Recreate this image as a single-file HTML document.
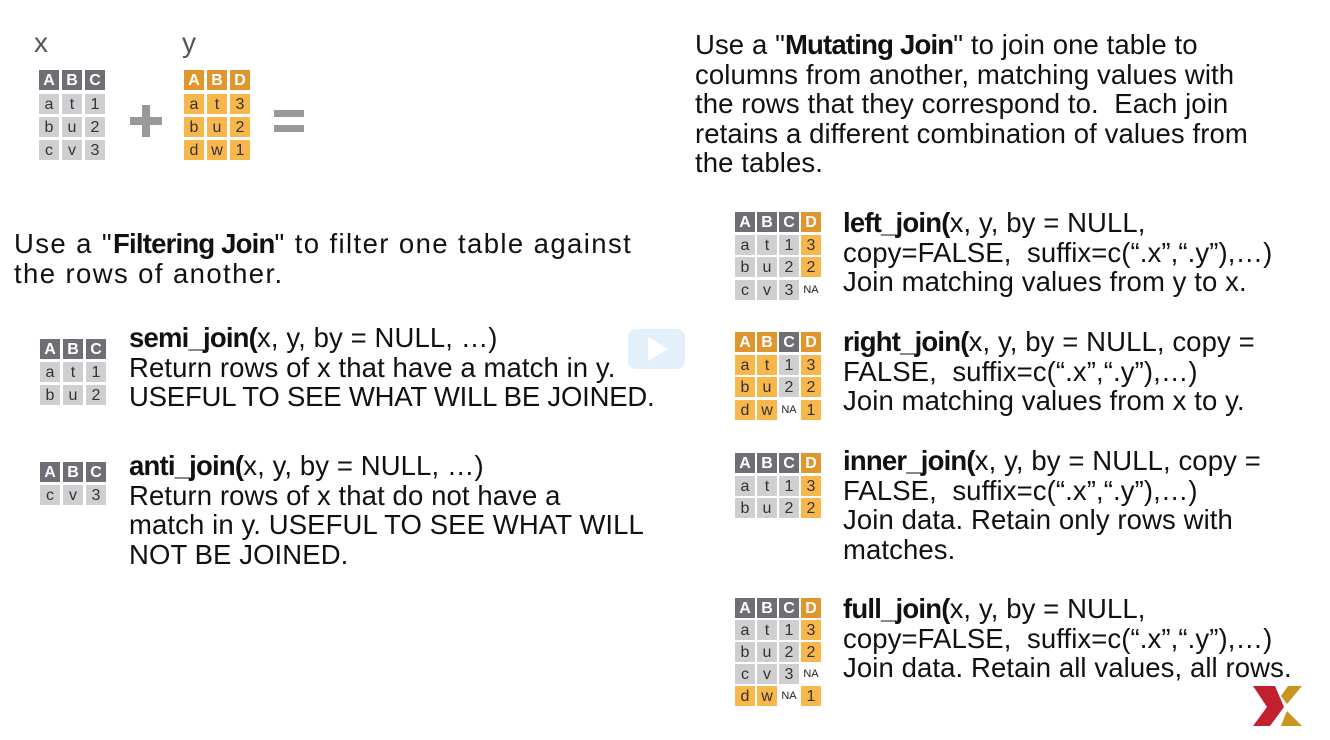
<!DOCTYPE html>
<html><head><meta charset="utf-8"><style>
body{margin:0;width:1330px;height:740px;background:#fff;position:relative;overflow:hidden;font-family:"Liberation Sans",sans-serif;color:#111}
.t{position:absolute;font-size:27.5px;line-height:29.5px;white-space:nowrap;letter-spacing:0.1px}
.tb{position:absolute}
.c{position:absolute;width:20px;height:20px;font-size:16px;line-height:21px;text-align:center;color:#333}
.h{color:#fff;font-weight:bold;font-size:16px}
.g{background:#cfcfd1}.G{background:#6e6f74}.o{background:#f8b74a}.O{background:#df962c}
.na{font-size:11px;color:#222}
b{font-weight:bold;letter-spacing:-0.8px}
</style></head><body>
<div class="t" style="left:34px;top:28px;font-size:28px;color:#555">x</div>
<div class="t" style="left:182px;top:28px;font-size:28px;color:#555">y</div>
<div class="tb" style="left:39px;top:70px">
<div class="c G h" style="left:0;top:0">A</div><div class="c G h" style="left:23px;top:0">B</div><div class="c G h" style="left:46px;top:0">C</div>
<div class="c g" style="left:0;top:24px">a</div><div class="c g" style="left:23px;top:24px">t</div><div class="c g" style="left:46px;top:24px">1</div>
<div class="c g" style="left:0;top:47px">b</div><div class="c g" style="left:23px;top:47px">u</div><div class="c g" style="left:46px;top:47px">2</div>
<div class="c g" style="left:0;top:70px">c</div><div class="c g" style="left:23px;top:70px">v</div><div class="c g" style="left:46px;top:70px">3</div>
</div>
<div style="position:absolute;left:130px;top:117px;width:32px;height:8px;background:#999"></div>
<div style="position:absolute;left:142px;top:105px;width:8px;height:32px;background:#999"></div>
<div class="tb" style="left:184px;top:70px">
<div class="c O h" style="left:0;top:0">A</div><div class="c O h" style="left:23px;top:0">B</div><div class="c O h" style="left:46px;top:0">D</div>
<div class="c o" style="left:0;top:24px">a</div><div class="c o" style="left:23px;top:24px">t</div><div class="c o" style="left:46px;top:24px">3</div>
<div class="c o" style="left:0;top:47px">b</div><div class="c o" style="left:23px;top:47px">u</div><div class="c o" style="left:46px;top:47px">2</div>
<div class="c o" style="left:0;top:70px">d</div><div class="c o" style="left:23px;top:70px">w</div><div class="c o" style="left:46px;top:70px">1</div>
</div>
<div style="position:absolute;left:274px;top:110px;width:30px;height:7px;background:#999"></div>
<div style="position:absolute;left:274px;top:125px;width:30px;height:7px;background:#999"></div>

<div class="t" style="left:695px;top:30px">Use a "<b>Mutating Join</b>" to join one table to<br>columns from another, matching values with<br>the rows that they correspond to.&nbsp; Each join<br>retains a different combination of values from<br>the tables.</div>

<div class="t" style="left:14px;top:229px;letter-spacing:1.4px">Use a "<b>Filtering Join</b>" to filter one table against<br>the rows of another.</div>

<div class="tb" style="left:40px;top:339px">
<div class="c G h" style="left:0;top:0">A</div><div class="c G h" style="left:23px;top:0">B</div><div class="c G h" style="left:46px;top:0">C</div>
<div class="c g" style="left:0;top:23px">a</div><div class="c g" style="left:23px;top:23px">t</div><div class="c g" style="left:46px;top:23px">1</div>
<div class="c g" style="left:0;top:46px">b</div><div class="c g" style="left:23px;top:46px">u</div><div class="c g" style="left:46px;top:46px">2</div>
</div>
<div class="t" style="left:129px;top:323px"><b>semi_join(</b>x, y, by = NULL, …)<br>Return rows of x that have a match in y.<br><span style="letter-spacing:-0.2px">USEFUL TO SEE WHAT WILL BE JOINED.</span></div>

<div class="tb" style="left:40px;top:462px">
<div class="c G h" style="left:0;top:0">A</div><div class="c G h" style="left:23px;top:0">B</div><div class="c G h" style="left:46px;top:0">C</div>
<div class="c g" style="left:0;top:23px">c</div><div class="c g" style="left:23px;top:23px">v</div><div class="c g" style="left:46px;top:23px">3</div>
</div>
<div class="t" style="left:129px;top:451px"><b>anti_join(</b>x, y, by = NULL, …)<br>Return rows of x that do not have a<br>match in y. USEFUL TO SEE WHAT WILL<br>NOT BE JOINED.</div>

<div style="position:absolute;left:628px;top:329px;width:57px;height:40px;border-radius:8px;background:rgba(200,225,245,0.5)"></div>
<div style="position:absolute;left:648px;top:337px;width:0;height:0;border-left:20px solid #fff;border-top:12px solid transparent;border-bottom:12px solid transparent"></div>

<div class="tb" style="left:735px;top:212px">
<div class="c G h" style="left:0;top:0">A</div><div class="c G h" style="left:22px;top:0">B</div><div class="c G h" style="left:44px;top:0">C</div><div class="c O h" style="left:66px;top:0">D</div>
<div class="c g" style="left:0;top:23px">a</div><div class="c g" style="left:22px;top:23px">t</div><div class="c g" style="left:44px;top:23px">1</div><div class="c o" style="left:66px;top:23px">3</div>
<div class="c g" style="left:0;top:45px">b</div><div class="c g" style="left:22px;top:45px">u</div><div class="c g" style="left:44px;top:45px">2</div><div class="c o" style="left:66px;top:45px">2</div>
<div class="c g" style="left:0;top:68px">c</div><div class="c g" style="left:22px;top:68px">v</div><div class="c g" style="left:44px;top:68px">3</div><div class="c na" style="left:66px;top:68px">NA</div>
</div>
<div class="t" style="left:843px;top:208px"><b>left_join(</b>x, y, by = NULL,<br>copy=FALSE,&nbsp; suffix=c(“.x”,“.y”),…)<br>Join matching values from y to x.</div>

<div class="tb" style="left:735px;top:332px">
<div class="c O h" style="left:0;top:0">A</div><div class="c O h" style="left:22px;top:0">B</div><div class="c G h" style="left:44px;top:0">C</div><div class="c O h" style="left:66px;top:0">D</div>
<div class="c o" style="left:0;top:23px">a</div><div class="c o" style="left:22px;top:23px">t</div><div class="c g" style="left:44px;top:23px">1</div><div class="c o" style="left:66px;top:23px">3</div>
<div class="c o" style="left:0;top:45px">b</div><div class="c o" style="left:22px;top:45px">u</div><div class="c g" style="left:44px;top:45px">2</div><div class="c o" style="left:66px;top:45px">2</div>
<div class="c o" style="left:0;top:68px">d</div><div class="c o" style="left:22px;top:68px">w</div><div class="c na" style="left:44px;top:68px">NA</div><div class="c o" style="left:66px;top:68px">1</div>
</div>
<div class="t" style="left:843px;top:327px"><b>right_join(</b>x, y, by = NULL, copy =<br>FALSE,&nbsp; suffix=c(“.x”,“.y”),…)<br>Join matching values from x to y.</div>

<div class="tb" style="left:735px;top:453px">
<div class="c G h" style="left:0;top:0">A</div><div class="c G h" style="left:22px;top:0">B</div><div class="c G h" style="left:44px;top:0">C</div><div class="c O h" style="left:66px;top:0">D</div>
<div class="c g" style="left:0;top:23px">a</div><div class="c g" style="left:22px;top:23px">t</div><div class="c g" style="left:44px;top:23px">1</div><div class="c o" style="left:66px;top:23px">3</div>
<div class="c g" style="left:0;top:45px">b</div><div class="c g" style="left:22px;top:45px">u</div><div class="c g" style="left:44px;top:45px">2</div><div class="c o" style="left:66px;top:45px">2</div>
</div>
<div class="t" style="left:843px;top:446px"><b>inner_join(</b>x, y, by = NULL, copy =<br>FALSE,&nbsp; suffix=c(“.x”,“.y”),…)<br>Join data. Retain only rows with<br>matches.</div>

<div class="tb" style="left:735px;top:598px">
<div class="c G h" style="left:0;top:0">A</div><div class="c G h" style="left:22px;top:0">B</div><div class="c G h" style="left:44px;top:0">C</div><div class="c O h" style="left:66px;top:0">D</div>
<div class="c g" style="left:0;top:22px">a</div><div class="c g" style="left:22px;top:22px">t</div><div class="c g" style="left:44px;top:22px">1</div><div class="c o" style="left:66px;top:22px">3</div>
<div class="c g" style="left:0;top:44px">b</div><div class="c g" style="left:22px;top:44px">u</div><div class="c g" style="left:44px;top:44px">2</div><div class="c o" style="left:66px;top:44px">2</div>
<div class="c g" style="left:0;top:66px">c</div><div class="c g" style="left:22px;top:66px">v</div><div class="c g" style="left:44px;top:66px">3</div><div class="c na" style="left:66px;top:66px">NA</div>
<div class="c o" style="left:0;top:88px">d</div><div class="c o" style="left:22px;top:88px">w</div><div class="c na" style="left:44px;top:88px">NA</div><div class="c o" style="left:66px;top:88px">1</div>
</div>
<div class="t" style="left:843px;top:594px"><b>full_join(</b>x, y, by = NULL,<br>copy=FALSE,&nbsp; suffix=c(“.x”,“.y”),…)<br>Join data. Retain all values, all rows.</div>

<svg style="position:absolute;left:1250px;top:684px" width="54" height="46" viewBox="0 0 54 46">
<polygon points="3,2 25,2 34,23 20,42 3,42 17,23" fill="#c2202f"/>
<polygon points="38,2 52,2 37,20 31,12" fill="#c8961e"/>
<polygon points="37,27 52,42 31,42 34,34" fill="#c8961e"/>
</svg>
</body></html>
